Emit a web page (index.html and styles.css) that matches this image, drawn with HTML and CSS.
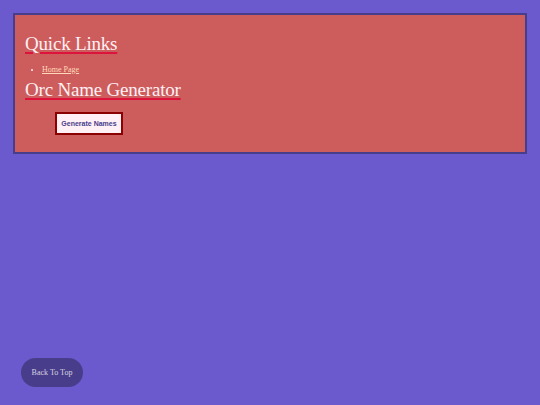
FILE: index.html
```html
<!DOCTYPE html>
<html>
<head>
<meta charset="utf-8">
<link rel="stylesheet" href="styles.css">
</head>
<body>
<main class="panel">
  <h2 class="heading">Quick Links</h2>
  <ul class="links">
    <li><a href="#">Home Page</a></li>
  </ul>
  <h2 class="heading">Orc Name Generator</h2>
  <div class="actions">
    <button class="gen-btn">Generate Names</button>
  </div>
</main>
<a class="back-top" href="#">Back To Top</a>
</body>
</html>
```

FILE: styles.css
```css
html, body {
  background: #6a5acd;
}
body {
  margin: 13px;
  font-family: "Liberation Serif", serif;
}
.panel {
  background: #cd5c5c;
  border: 2px solid #483d8b;
  padding: 18px 10px 17px 10px;
}
.heading {
  font-family: "Liberation Serif", serif;
  font-weight: normal;
  font-size: 19px;
  letter-spacing: -0.2px;
  color: #fff0f5;
  text-decoration: underline;
  text-decoration-color: #dc143c;
  text-decoration-thickness: 2px;
  text-underline-offset: 2px;
  margin: 0;
  line-height: 22px;
}
.links {
  margin: 10px 0 5px 0;
  padding-left: 17px;
  font-size: 8px;
  color: #fff0f5;
}
.links a {
  color: #ffdab9;
}
.actions {
  padding: 11px 0 0 30px;
}
.gen-btn {
  display: block;
  font-family: "Liberation Sans", sans-serif;
  font-weight: bold;
  font-size: 7px;
  white-space: nowrap;
  color: #483d8b;
  background: #fff0f5;
  border: 2px solid #8b0000;
  padding: 0;
  height: 23px;
  width: 68px;
}
.back-top {
  position: fixed;
  left: 21px;
  bottom: 18px;
  width: 62px;
  height: 29px;
  border-radius: 15px;
  background: #483d8b;
  color: #d6d3e0;
  font-size: 8px;
  text-decoration: none;
  display: flex;
  align-items: center;
  justify-content: center;
}
```
